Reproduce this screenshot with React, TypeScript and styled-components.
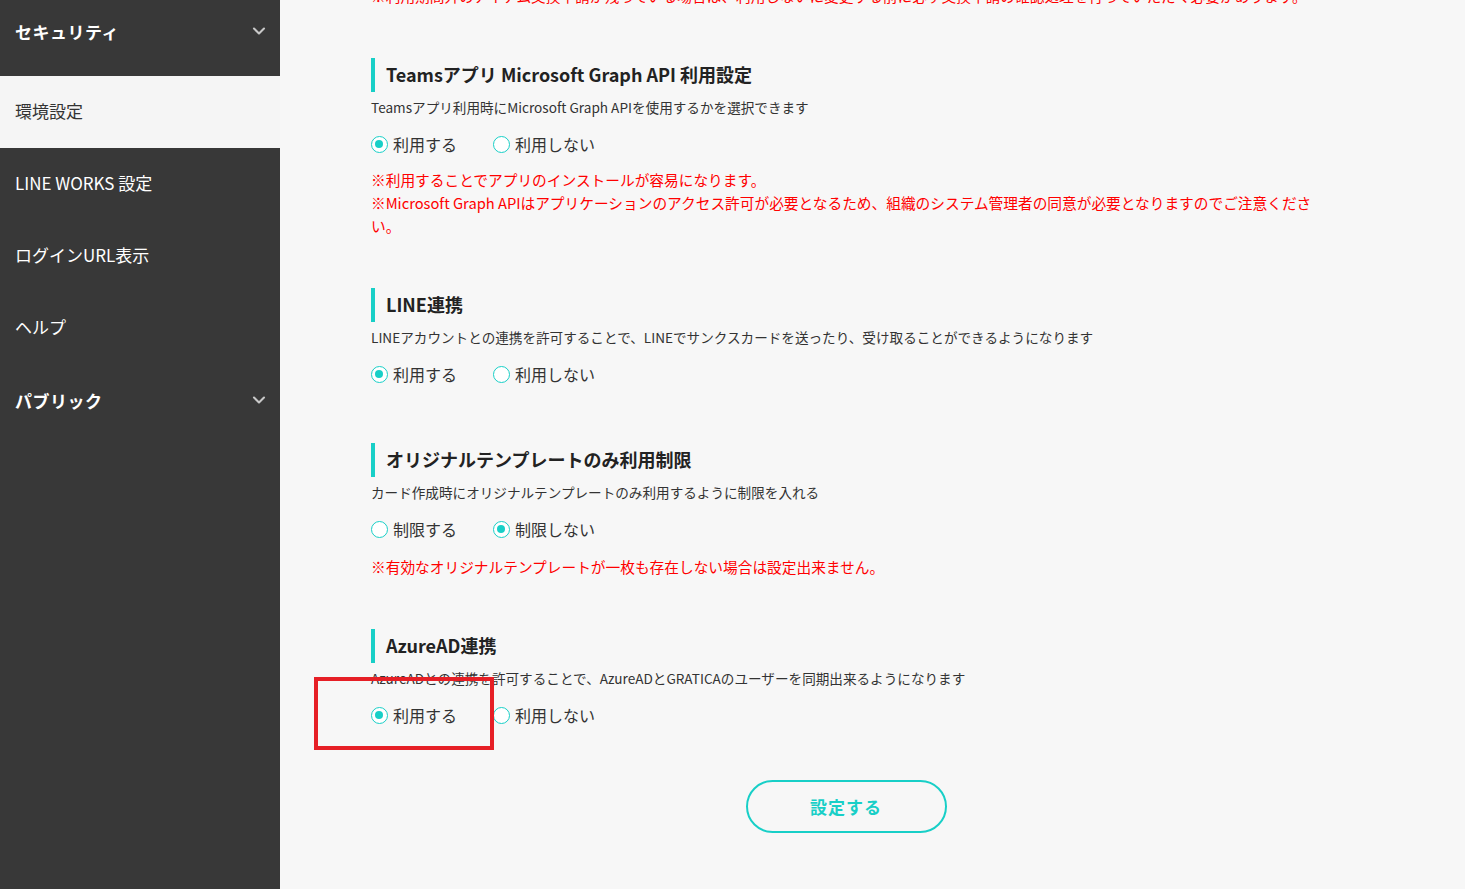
import React, { useState } from 'react'
import styled, { createGlobalStyle } from 'styled-components'
import { ChevronDown } from 'lucide-react'

const teal = '#18cfc7'

const GlobalStyle = createGlobalStyle`
  html, body {
    margin: 0;
    padding: 0;
    background: #f7f7f7;
    font-family: "Noto Sans CJK JP", "Noto Sans", sans-serif;
  }
`

const Page = styled.div`
  position: relative;
  display: flex;
  width: 1465px;
  height: 889px;
  overflow: hidden;
`

const Sidebar = styled.nav`
  flex: 0 0 280px;
  background: #383838;
  color: #fff;
`

const GroupRow = styled.div<{ $height: number; $offset: number }>`
  display: flex;
  align-items: center;
  justify-content: space-between;
  height: ${p => p.$height}px;
  padding: 0 15px ${p => p.$offset}px 15px;
  box-sizing: border-box;
  font-size: 17px;
  font-weight: 700;
  letter-spacing: 0.5px;
  svg {
    color: #c8c8c8;
    margin-right: -4px;
  }
`

const NavItem = styled.div<{ $active?: boolean }>`
  display: flex;
  align-items: center;
  height: 72px;
  padding: 0 15px 3px;
  box-sizing: border-box;
  font-size: 17px;
  background: ${p => (p.$active ? '#f5f5f5' : 'transparent')};
  color: ${p => (p.$active ? '#333' : '#fff')};
`

const Main = styled.main`
  flex: 1;
  padding-left: 91px;
`

const Content = styled.div`
  display: flex;
  flex-direction: column;
  width: 950px;
`

const Notes = styled.div<{ $top?: number }>`
  margin-top: ${p => p.$top ?? 6}px;
  max-width: 945px;
  color: #ff0000;
  font-size: 14.7px;
  line-height: 23px;
  p {
    margin: 0;
  }
`

const Section = styled.section`
  display: flex;
  flex-direction: column;
  margin-top: 51px;
`

const Heading = styled.h2`
  margin: 0;
  height: 34px;
  line-height: 33px;
  border-left: 4px solid ${teal};
  padding-left: 11px;
  font-size: 18px;
  font-weight: 700;
  color: #222;
`

const Description = styled.p`
  margin: 4px 0 0;
  font-size: 13.6px;
  line-height: 22px;
  color: #333;
`

const RadioRow = styled.div`
  display: flex;
  gap: 36px;
  height: 24px;
  margin: 14px 0 6px;
`

const Option = styled.label`
  display: flex;
  align-items: center;
  gap: 5px;
  font-size: 16px;
  color: #333;
  cursor: pointer;
`

const Circle = styled.span<{ $checked: boolean }>`
  position: relative;
  width: 17px;
  height: 17px;
  box-sizing: border-box;
  border: 1.5px solid ${teal};
  border-radius: 50%;
  background: #fff;
  &::after {
    content: '';
    position: absolute;
    left: 3px;
    top: 3px;
    width: 8px;
    height: 8px;
    border-radius: 50%;
    background: ${teal};
    display: ${p => (p.$checked ? 'block' : 'none')};
  }
`

const ButtonRow = styled.div`
  display: flex;
  justify-content: center;
  margin-top: 47px;
`

const SubmitButton = styled.button`
  width: 201px;
  height: 53px;
  border: 2px solid ${teal};
  border-radius: 27px;
  background: transparent;
  color: ${teal};
  font-family: inherit;
  font-size: 17px;
  font-weight: 700;
  letter-spacing: 1px;
  cursor: pointer;
`

const Highlight = styled.div`
  position: absolute;
  left: 314px;
  top: 677px;
  width: 180px;
  height: 73px;
  box-sizing: border-box;
  border: 4px solid #e61f26;
  pointer-events: none;
`

interface RadioGroupProps {
  options: string[]
  initial: number
}

const RadioGroup: React.FC<RadioGroupProps> = ({ options, initial }) => {
  const [value, setValue] = useState(initial)
  return (
    <RadioRow>
      {options.map((o, i) => (
        <Option key={o} onClick={() => setValue(i)}>
          <Circle $checked={value === i} />
          {o}
        </Option>
      ))}
    </RadioRow>
  )
}

const useOptions = ['利用する', '利用しない']

export default function App() {
  return (
    <>
      <GlobalStyle />
      <Page>
        <Sidebar>
          <GroupRow $height={76} $offset={14}>
            セキュリティ
            <ChevronDown size={20} strokeWidth={2.5} />
          </GroupRow>
          <NavItem $active>環境設定</NavItem>
          <NavItem>LINE WORKS 設定</NavItem>
          <NavItem>ログインURL表示</NavItem>
          <NavItem>ヘルプ</NavItem>
          <GroupRow $height={72} $offset={0}>
            パブリック
            <ChevronDown size={20} strokeWidth={2.5} />
          </GroupRow>
        </Sidebar>

        <Main>
          <Content>
            <Notes $top={-16}>
              <p>※利用期間外のアイテム交換申請が残っている場合は、利用しないに変更する前に必ず交換申請の確認処理を行っていただく必要があります。</p>
            </Notes>

            <Section>
              <Heading>Teamsアプリ Microsoft Graph API 利用設定</Heading>
              <Description>Teamsアプリ利用時にMicrosoft Graph APIを使用するかを選択できます</Description>
              <RadioGroup options={useOptions} initial={0} />
              <Notes>
                <p>※利用することでアプリのインストールが容易になります。</p>
                <p>※Microsoft Graph APIはアプリケーションのアクセス許可が必要となるため、組織のシステム管理者の同意が必要となりますのでご注意ください。</p>
              </Notes>
            </Section>

            <Section>
              <Heading>LINE連携</Heading>
              <Description>LINEアカウントとの連携を許可することで、LINEでサンクスカードを送ったり、受け取ることができるようになります</Description>
              <RadioGroup options={useOptions} initial={0} />
            </Section>

            <Section>
              <Heading>オリジナルテンプレートのみ利用制限</Heading>
              <Description>カード作成時にオリジナルテンプレートのみ利用するように制限を入れる</Description>
              <RadioGroup options={['制限する', '制限しない']} initial={1} />
              <Notes $top={8}>
                <p>※有効なオリジナルテンプレートが一枚も存在しない場合は設定出来ません。</p>
              </Notes>
            </Section>

            <Section>
              <Heading>AzureAD連携</Heading>
              <Description>AzureADとの連携を許可することで、AzureADとGRATICAのユーザーを同期出来るようになります</Description>
              <RadioGroup options={useOptions} initial={0} />
            </Section>

            <ButtonRow>
              <SubmitButton>設定する</SubmitButton>
            </ButtonRow>
          </Content>
        </Main>

        <Highlight />
      </Page>
    </>
  )
}
